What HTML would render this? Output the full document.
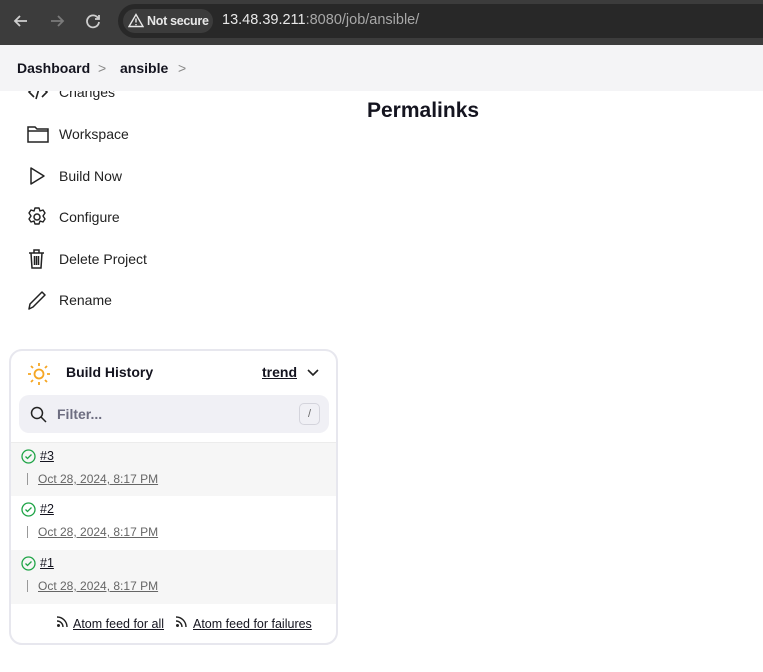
<!DOCTYPE html>
<html><head><meta charset="utf-8"><style>
*{box-sizing:border-box;margin:0;padding:0}
body{width:763px;height:672px;overflow:hidden;background:#fff;font-family:"Liberation Sans",sans-serif;color:#14141f;position:relative}
.top{position:absolute;left:0;top:0;width:763px;height:45px;background:#3c3c3c;z-index:3}
.pill{position:absolute;left:118px;top:4px;width:660px;height:34px;border-radius:17px;background:#282828}
.ns{position:absolute;left:123px;top:9px;width:90px;height:24px;border-radius:12px;background:#3c3c3c;color:#e8e8e8;font-size:12.5px;font-weight:bold;line-height:24px;padding-left:24px;white-space:nowrap;letter-spacing:-0.3px}
.url{position:absolute;left:222px;top:12px;font-size:14.5px;color:#e8e8e8}
.url span{color:#a8a8a8}
.crumb{position:absolute;left:0;top:45px;width:763px;height:46px;background:#f4f4f6;z-index:2}
.crumb div{position:absolute;top:15px;font-size:14px;font-weight:bold}
.item{position:absolute;left:27px;font-size:14px;color:#222}
.item svg{position:absolute;left:0;top:-2px}
.item span{position:absolute;left:32px;top:0;white-space:nowrap}
h1{position:absolute;left:367px;top:99px;font-size:21px;font-weight:bold}
.card{position:absolute;left:9px;top:349px;width:329px;height:296px;border:2px solid #e7e7ee;border-radius:13px;overflow:hidden;background:#fff}
.row{position:absolute;left:0;width:325px;height:54px}
.row .n{position:absolute;left:29px;top:6px;font-size:12.5px;text-decoration:underline}
.row .d{position:absolute;left:27px;top:29px;font-size:12px;color:#666;text-decoration:underline}
.row .bar{position:absolute;left:16px;top:30px;width:1px;height:12px;background:#999}
.row svg{position:absolute;left:10px;top:6px}
</style></head><body>
<div class="top">
<svg style="position:absolute;left:10px;top:10px" width="22" height="22" viewBox="0 0 22 22"><path d="M17 11H5M10 6l-5 5 5 5" stroke="#cfcfcf" stroke-width="1.8" fill="none"/></svg>
<svg style="position:absolute;left:46px;top:10px" width="22" height="22" viewBox="0 0 22 22"><path d="M5 11h12M12 6l5 5-5 5" stroke="#7a7a7a" stroke-width="1.8" fill="none"/></svg>
<svg style="position:absolute;left:82px;top:10px" width="22" height="22" viewBox="0 0 22 22"><path d="M16 8a6 6 0 1 0 1 4" stroke="#cfcfcf" stroke-width="1.8" fill="none"/><path d="M17 5v4h-4" stroke="#cfcfcf" stroke-width="1.8" fill="none"/></svg>
<div class="pill"></div>
<div class="ns">Not secure</div>
<svg style="position:absolute;left:128px;top:13px" width="16" height="15" viewBox="0 0 16 15"><path d="M8 1.5L1 13.5h14z" stroke="#e8e8e8" stroke-width="1.4" fill="none"/><path d="M8 5.5v4M8 11v1.2" stroke="#e8e8e8" stroke-width="1.4"/></svg>
<div class="url">13.48.39.211<span>:8080/job/ansible/</span></div>
</div>
<div class="crumb">
<div style="left:17px">Dashboard</div>
<div style="left:98px;font-weight:normal;color:#888">&gt;</div>
<div style="left:120px">ansible</div>
<div style="left:178px;font-weight:normal;color:#888">&gt;</div>
</div>
<div class="item" style="top:84px"><svg width="22" height="20" viewBox="0 0 22 20"><path d="M7 5L2 10l5 5M15 5l5 5-5 5M13 3l-4 14" stroke="#222" stroke-width="1.6" fill="none"/></svg><span>Changes</span></div>
<div class="item" style="top:126px"><svg width="22" height="20" viewBox="0 0 22 20"><path d="M1 3h7l2 2h11v13H1z M1 7h20" stroke="#222" stroke-width="1.5" fill="none"/></svg><span>Workspace</span></div>
<div class="item" style="top:168px"><svg width="22" height="20" viewBox="0 0 22 20"><path d="M4 2l13 8-13 8z" stroke="#222" stroke-width="1.5" fill="none" stroke-linejoin="round"/></svg><span>Build Now</span></div>
<div class="item" style="top:209px"><svg width="22" height="20" viewBox="0 0 22 20"><circle cx="10" cy="10" r="3" stroke="#222" stroke-width="1.5" fill="none"/><path d="M8 1h4l1 3 3-1 2 3-2 3 2 3-2 3-3-1-1 3H8l-1-3-3 1-2-3 2-3-2-3 2-3 3 1z" stroke="#222" stroke-width="1.4" fill="none" stroke-linejoin="round"/></svg><span>Configure</span></div>
<div class="item" style="top:251px"><svg width="22" height="20" viewBox="0 0 22 20"><path d="M2 4h15M7 4V1h5v3M4 4l1 15h9l1-15M7.5 7v9M9.5 7v9M11.5 7v9" stroke="#222" stroke-width="1.5" fill="none"/></svg><span>Delete Project</span></div>
<div class="item" style="top:292px"><svg width="22" height="20" viewBox="0 0 22 20"><path d="M2 19l1-5L15 2l3 3L6 17z" stroke="#222" stroke-width="1.5" fill="none" stroke-linejoin="round"/></svg><span>Rename</span></div>
<h1>Permalinks</h1>
<div class="card">
<svg style="position:absolute;left:16px;top:11px" width="24" height="24" viewBox="0 0 24 24"><circle cx="12" cy="12" r="4.5" stroke="#f5a623" stroke-width="1.8" fill="none"/><path d="M12 1v3M12 20v3M1 12h3M20 12h3M4 4l2 2M18 18l2 2M4 20l2-2M18 6l2-2" stroke="#f5a623" stroke-width="1.8"/></svg>
<div style="position:absolute;left:55px;top:13px;font-size:14px;font-weight:bold">Build History</div>
<div style="position:absolute;left:251px;top:13px;font-size:14px;font-weight:bold;text-decoration:underline">trend</div>
<svg style="position:absolute;left:295px;top:14px" width="14" height="14" viewBox="0 0 14 14"><path d="M2 5l5 5 5-5" stroke="#222" stroke-width="1.6" fill="none"/></svg>
<div style="position:absolute;left:8px;top:44px;width:310px;height:38px;border-radius:10px;background:#f0f0f5"></div>
<svg style="position:absolute;left:19px;top:55px" width="17" height="17" viewBox="0 0 17 17"><circle cx="7" cy="7" r="5.5" stroke="#222" stroke-width="1.5" fill="none"/><path d="M11 11l5 5" stroke="#222" stroke-width="1.5"/></svg>
<div style="position:absolute;left:46px;top:55px;font-size:14px;font-weight:bold;color:#6d6d80">Filter...</div>
<div style="position:absolute;left:288px;top:52px;width:21px;height:22px;border:1px solid #d4d4dc;border-radius:5px;font-size:11px;color:#666;text-align:center;line-height:20px">/</div>
<div class="row" style="top:91px;background:#f6f6f6;border-top:1px solid #ececec"><svg width="15" height="15" viewBox="0 0 15 15"><circle cx="7.5" cy="7.5" r="6.5" stroke="#1ea446" stroke-width="1.3" fill="none"/><path d="M4.5 7.5l2 2 4-4" stroke="#1ea446" stroke-width="1.3" fill="none"/></svg><div class="n">#3</div><div class="bar"></div><div class="d">Oct 28, 2024, 8:17 PM</div></div>
<div class="row" style="top:145px"><svg width="15" height="15" viewBox="0 0 15 15"><circle cx="7.5" cy="7.5" r="6.5" stroke="#1ea446" stroke-width="1.3" fill="none"/><path d="M4.5 7.5l2 2 4-4" stroke="#1ea446" stroke-width="1.3" fill="none"/></svg><div class="n">#2</div><div class="bar"></div><div class="d">Oct 28, 2024, 8:17 PM</div></div>
<div class="row" style="top:199px;background:#f6f6f6"><svg width="15" height="15" viewBox="0 0 15 15"><circle cx="7.5" cy="7.5" r="6.5" stroke="#1ea446" stroke-width="1.3" fill="none"/><path d="M4.5 7.5l2 2 4-4" stroke="#1ea446" stroke-width="1.3" fill="none"/></svg><div class="n">#1</div><div class="bar"></div><div class="d">Oct 28, 2024, 8:17 PM</div></div>
<svg style="position:absolute;left:45px;top:264px" width="13" height="13" viewBox="0 0 13 13"><circle cx="2.5" cy="10.5" r="1.5" fill="#222"/><path d="M1 6a6 6 0 0 1 6 6M1 2a10 10 0 0 1 10 10" stroke="#222" stroke-width="1.4" fill="none"/></svg>
<div style="position:absolute;left:62px;top:266px;font-size:12.5px;text-decoration:underline">Atom feed for all</div>
<svg style="position:absolute;left:164px;top:264px" width="13" height="13" viewBox="0 0 13 13"><circle cx="2.5" cy="10.5" r="1.5" fill="#222"/><path d="M1 6a6 6 0 0 1 6 6M1 2a10 10 0 0 1 10 10" stroke="#222" stroke-width="1.4" fill="none"/></svg>
<div style="position:absolute;left:182px;top:266px;font-size:12.5px;text-decoration:underline">Atom feed for failures</div>
</div>
</body></html>
